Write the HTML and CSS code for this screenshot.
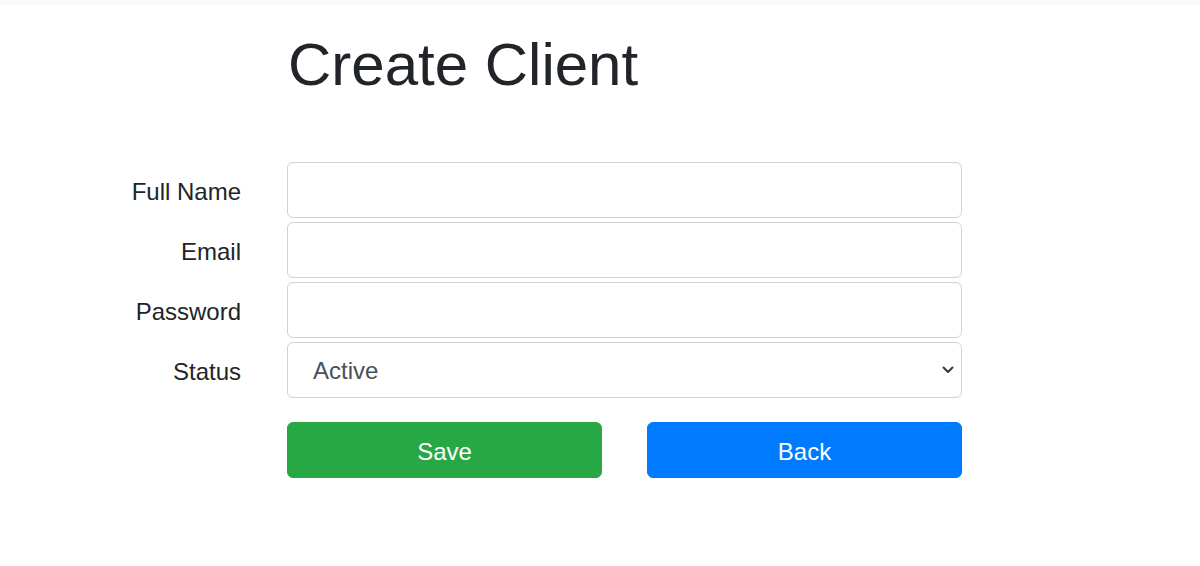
FILE: index.html
```html
<!DOCTYPE html>
<html lang="en">
<head>
<meta charset="utf-8">
<title>Create Client</title>
<link rel="stylesheet" href="styles.css">
</head>
<body>
<div class="topbar"></div>
<main class="page">
  <h1 class="title">Create Client</h1>
  <form class="form">
    <label class="label" for="name">Full Name</label>
    <input class="control" id="name" type="text">
    <label class="label" for="email">Email</label>
    <input class="control" id="email" type="email">
    <label class="label" for="password">Password</label>
    <input class="control" id="password" type="password">
    <label class="label" for="status">Status</label>
    <div class="select-wrap">
      <select class="control select" id="status">
        <option>Active</option>
        <option>Inactive</option>
      </select>
      <svg class="chevron" width="12" height="8" viewBox="0 0 12 8" aria-hidden="true"><path d="M1.5 1.5 L6 6 L10.5 1.5" fill="none" stroke="#343a40" stroke-width="2" stroke-linecap="round" stroke-linejoin="round"/></svg>
    </div>
    <div class="actions">
      <button type="submit" class="btn btn-save">Save</button>
      <button type="button" class="btn btn-back">Back</button>
    </div>
  </form>
</main>
</body>
</html>
```
FILE: styles.css
```css
* { box-sizing: border-box; }
html, body { margin: 0; padding: 0; background: #fff; }
body {
  font-family: "Liberation Sans", Arial, sans-serif;
  color: #212529;
  font-size: 24px;
  line-height: 1.5;
}
.topbar {
  height: 5px;
  background: #f8f9fa;
}
.page {
  padding-left: 287px;
  padding-top: 24px;
}
.title {
  margin: 0 0 61px 1px;
  font-size: 60px;
  font-weight: 400;
  line-height: 72px;
}
.form {
  display: grid;
  grid-template-columns: 241px 675px;
  column-gap: 46px;
  row-gap: 4px;
  align-items: center;
  margin-left: -287px;
}
.label {
  text-align: right;
  font-size: 24px;
  padding-top: 3px;
  color: #212529;
}
.control {
  display: block;
  width: 100%;
  height: 56px;
  padding: 10px 18px 8px;
  font: inherit;
  font-size: 24px;
  line-height: 36px;
  color: #495057;
  background: #fff;
  border: 1px solid #ced4da;
  border-radius: 6px;
  outline: none;
}
.select-wrap { position: relative; }
.select {
  -webkit-appearance: none;
  appearance: none;
  padding-left: 25px;
  padding-right: 40px;
}
.chevron {
  position: absolute;
  right: 8px;
  top: 24px;
  pointer-events: none;
}
.actions {
  grid-column: 2;
  display: flex;
  gap: 45px;
  margin-top: 20px;
}
.btn {
  width: 315px;
  height: 56px;
  padding: 3px 12px 0;
  border: 1px solid transparent;
  border-radius: 6px;
  font: inherit;
  font-size: 24px;
  line-height: 36px;
  color: #fff;
  cursor: pointer;
}
.btn-save { background: #28a745; border-color: #28a745; }
.btn-back { background: #007bff; border-color: #007bff; }
```
